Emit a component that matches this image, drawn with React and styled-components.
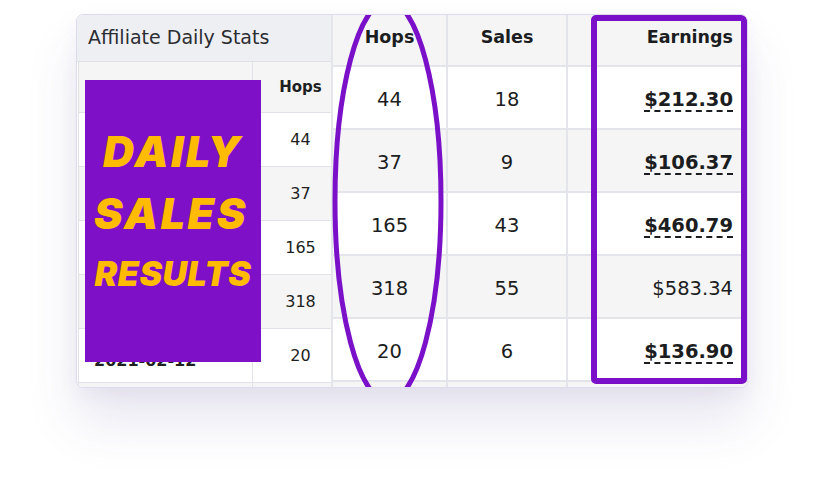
import React from 'react';
import styled, { createGlobalStyle } from 'styled-components';

const GlobalStyle = createGlobalStyle`
  html, body {
    margin: 0;
    padding: 0;
    background: #ffffff;
  }
  body {
    font-family: "DejaVu Sans", Verdana, sans-serif;
    color: #212529;
  }
`;

const PURPLE = '#7b10c9';

const rows = [
  { date: '', hops: 44, sales: 18, earnings: '$212.30', flagged: true },
  { date: '', hops: 37, sales: 9, earnings: '$106.37', flagged: true },
  { date: '', hops: 165, sales: 43, earnings: '$460.79', flagged: true },
  { date: '', hops: 318, sales: 55, earnings: '$583.34', flagged: false },
  { date: '2021-02-12', hops: 20, sales: 6, earnings: '$136.90', flagged: true },
];

// Styled Components
const Stage = styled.div`
  padding: 14px 0 0 76px;
  height: 468px;
`;

const Card = styled.div`
  position: relative;
  display: flex;
  width: 670px;
  height: 372px;
  border: 1px solid #dedbef;
  border-radius: 7px;
  background: #ffffff;
  overflow: hidden;
  box-shadow: 0 34px 52px rgba(72, 56, 140, 0.12), 0 8px 18px rgba(72, 56, 140, 0.05);
`;

const LeftPanel = styled.div`
  position: relative;
  display: flex;
  flex-direction: column;
  width: 254px;
  flex-shrink: 0;
  overflow: hidden;
`;

const PanelHeader = styled.div`
  flex-shrink: 0;
  height: 47px;
  display: flex;
  align-items: center;
  padding: 0 0 2px 11px;
  box-sizing: border-box;
  background: #eeeff3;
  border-bottom: 1px solid #dfe1e6;
  font-size: 19px;
  color: #2b2d31;
`;

const MiniTable = styled.div`
  flex-shrink: 0;
  display: grid;
  grid-template-columns: 174px 79px;
  grid-template-rows: 51px;
  grid-auto-rows: 54px;
  margin-left: 1px;
  border-left: 1px solid #dfe1e6;
`;

const MiniCell = styled.div`
  display: flex;
  align-items: center;
  justify-content: ${p => (p.$date ? 'flex-start' : 'center')};
  padding: ${p => (p.$date ? '9px 0 0 15px' : '0 0 0 17px')};
  box-sizing: border-box;
  background: ${p => (p.$shade ? '#f5f5f6' : '#ffffff')};
  border-bottom: 1px solid #e1e3e8;
  border-right: 1px solid #e1e3e8;
  font-size: ${p => (p.$head ? '15px' : '16px')};
  font-weight: ${p => (p.$head || p.$date ? 700 : 400)};
  color: #1d1f22;
`;

const Promo = styled.div`
  position: absolute;
  left: 8px;
  top: 65px;
  width: 176px;
  height: 282px;
  background: #7e10c7;
  display: flex;
  flex-direction: column;
  align-items: center;
  padding-top: 40px;
  box-sizing: border-box;
  font-family: Inter, "Open Sans", sans-serif;
  font-style: italic;
  font-weight: 900;
  color: #ffbb00;
`;

const PromoLine = styled.div`
  font-size: ${p => p.$size}px;
  line-height: ${p => p.$lh}px;
  letter-spacing: ${p => p.$spacing}px;
  margin-left: ${p => p.$shift || 0}px;
  white-space: nowrap;
`;

const StatsTable = styled.div`
  display: grid;
  grid-template-columns: 115px 120px 181px;
  grid-template-rows: 52px;
  grid-auto-rows: 63px;
  flex: 1;
`;

const HeadCell = styled.div`
  display: flex;
  align-items: center;
  justify-content: ${p => (p.$right ? 'flex-end' : 'center')};
  padding: ${p => (p.$right ? '0 14px 6px 0' : '0 0 6px 0')};
  background: #f5f5f6;
  border-left: 2px solid #e3e5ea;
  border-bottom: 2px solid #e3e5ea;
  font-size: 17.5px;
  font-weight: 700;
  color: #1b1d20;
`;

const Cell = styled.div`
  display: flex;
  align-items: center;
  justify-content: ${p => (p.$right ? 'flex-end' : 'center')};
  padding-right: ${p => (p.$right ? '14px' : '0')};
  padding-top: 3px;
  box-sizing: border-box;
  background: ${p => (p.$shade ? '#f5f5f6' : '#ffffff')};
  border-left: 2px solid #e3e5ea;
  border-bottom: 2px solid #e3e5ea;
  font-size: 19.5px;
  color: #1b1d20;
`;

const Amount = styled.span`
  font-weight: ${p => (p.$flagged ? 700 : 400)};
  text-decoration: ${p => (p.$flagged ? 'underline dashed' : 'none')};
  text-decoration-thickness: 1.5px;
  text-underline-offset: 5px;
`;

const Highlight = styled.div`
  position: absolute;
  left: 514px;
  top: 0;
  width: 156px;
  height: 369px;
  border: 6px solid ${PURPLE};
  border-radius: 5px;
  box-sizing: border-box;
  pointer-events: none;
`;

const Ring = styled.svg`
  position: absolute;
  left: 254px;
  top: -1px;
  pointer-events: none;
`;
// End of Styled Components

const App = () => (
  <>
    <GlobalStyle />
    <Stage>
      <Card>
        <LeftPanel>
          <PanelHeader>Affiliate Daily Stats</PanelHeader>
          <MiniTable>
            <MiniCell $shade $head />
            <MiniCell $shade $head>Hops</MiniCell>
            {rows.map((r, i) => (
              <React.Fragment key={r.hops}>
                <MiniCell $date $shade={i % 2 === 1}>{r.date}</MiniCell>
                <MiniCell $shade={i % 2 === 1}>{r.hops}</MiniCell>
              </React.Fragment>
            ))}
            <MiniCell $shade />
            <MiniCell $shade />
          </MiniTable>
          <Promo>
            <PromoLine $size={43} $lh={62} $spacing={2.5}>DAILY</PromoLine>
            <PromoLine $size={43} $lh={62} $spacing={2.5} $shift={-4}>SALES</PromoLine>
            <PromoLine $size={34} $lh={60} $spacing={0.5}>RESULTS</PromoLine>
          </Promo>
        </LeftPanel>

        <StatsTable>
          <HeadCell>Hops</HeadCell>
          <HeadCell>Sales</HeadCell>
          <HeadCell $right>Earnings</HeadCell>
          {rows.map((r, i) => (
            <React.Fragment key={r.hops}>
              <Cell $shade={i % 2 === 1}>{r.hops}</Cell>
              <Cell $shade={i % 2 === 1}>{r.sales}</Cell>
              <Cell $shade={i % 2 === 1} $right>
                <Amount $flagged={r.flagged}>{r.earnings}</Amount>
              </Cell>
            </React.Fragment>
          ))}
          <Cell $shade />
          <Cell $shade />
          <Cell $shade />
        </StatsTable>

        <Ring width="120" height="380" viewBox="0 0 120 380">
          <ellipse cx="57" cy="187" rx="53" ry="200" fill="none" stroke={PURPLE} strokeWidth="5" />
        </Ring>
        <Highlight />
      </Card>
    </Stage>
  </>
);

export default App;
